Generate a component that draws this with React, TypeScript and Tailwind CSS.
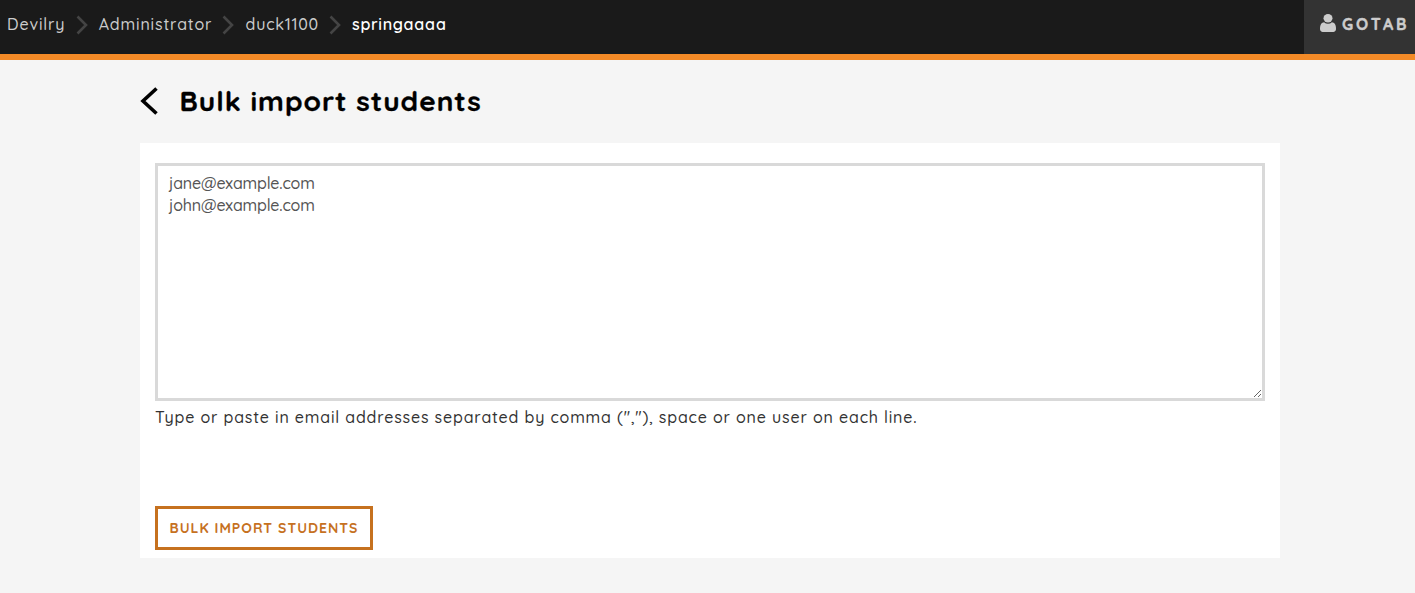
import React from "react";

const crumbs = [
  { label: "Devilry", text: "w-[58px] tracking-[0.85px]" },
  { label: "Administrator", text: "w-[113px] tracking-[0.85px]" },
  { label: "duck1100", text: "w-[73px] tracking-[0.75px]" },
];

function Separator() {
  return (
    <svg className="mt-[15px] mr-[11px] ml-[10.700px] h-5 w-3 shrink-0" viewBox="0 0 12 20" fill="none" stroke="#444" strokeWidth="2.6">
      <path d="M1.5 1.5 L10 10 L1.5 18.5" />
    </svg>
  );
}

function Header() {
  return (
    <header className="flex h-[60px] justify-between border-b-[6px] border-[#f38a27] bg-[#1a1a1a]">
      <nav className="flex pl-[7px] text-base leading-[48px] font-medium text-[#ccc]">
        {crumbs.map((c) => (
          <React.Fragment key={c.label}>
            <a className={"whitespace-nowrap " + c.text}>{c.label}</a>
            <Separator />
          </React.Fragment>
        ))}
        <span className="font-semibold whitespace-nowrap tracking-[0.68px] text-white">springaaaa</span>
      </nav>
      <button className="flex w-[111px] bg-[#333] pl-4 text-[#ccc]">
        <svg className="mt-[14px] h-[18px] w-4 shrink-0" viewBox="0 0 1280 1536" preserveAspectRatio="none" fill="currentColor">
          <path d="M1280 1271q0 109-62.500 187t-150.500 78h-854q-88 0-150.500-78t-62.500-187q0-85 8.500-160.500t31.500-152 58.500-131 94-89 134.500-34.500q131 128 313 128t313-128q76 0 134.500 34.500t94 89 58.500 131 31.500 152 8.500 160.500z" />
          <circle cx="640" cy="370" r="360" />
        </svg>
        <span className="ml-[6px] text-base leading-[48px] font-bold tracking-[2.9px] [-webkit-text-stroke:0.4px_#ccc]">GOTAB</span>
      </button>
    </header>
  );
}

export default function App() {
  return (
    <div className="min-h-screen bg-[#f5f5f5] font-['Quicksand','Lato',sans-serif] text-[#333]">
      <Header />
      <main className="ml-[140px] w-[1140px]">
        <div className="flex h-[83px]">
          <svg className="mt-[26px] h-[30px] w-[18px] shrink-0" viewBox="0 0 18 30" fill="none" stroke="#000" strokeWidth="3.6">
            <path d="M16.500 2.500 L3 15 L16.500 27.500" />
          </svg>
          <h1 className="ml-[21.500px] pt-[21px] text-[28px] leading-10 font-bold tracking-[0.98px] whitespace-nowrap text-black [-webkit-text-stroke:0.3px_black]">Bulk import students</h1>
        </div>
        <section className="h-[415px] bg-white px-[15px] pt-5">
          <textarea
            className="block h-[238px] w-full resize border-[3px] border-[#d9d9d9] bg-white px-[11px] py-[6px] text-base leading-[22px] font-medium tracking-[-0.16px] text-[#555] outline-none"
            defaultValue={"jane@example.com\njohn@example.com"}
          />
          <p className="mt-[5px] text-base leading-[22px] font-medium tracking-[0.83px] whitespace-nowrap">
            Type or paste in email addresses separated by comma (&quot;,&quot;), space or one user on each line.
          </p>
          <button className="mt-[78px] block h-11 w-[218px] border-[3px] border-[#c6711f] text-[14px] font-bold tracking-[1px] whitespace-nowrap text-[#c6711f]">
            BULK IMPORT STUDENTS
          </button>
        </section>
      </main>
    </div>
  );
}
